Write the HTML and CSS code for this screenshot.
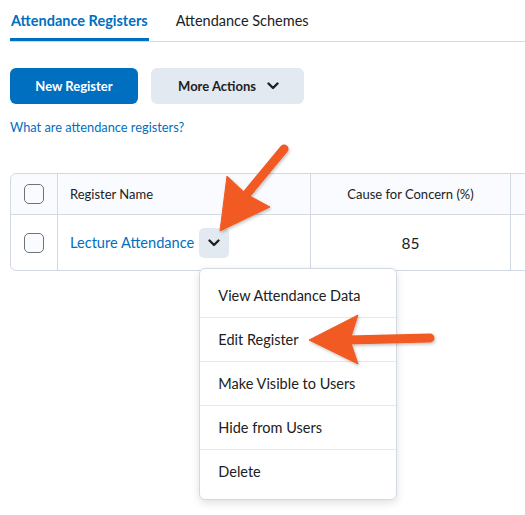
FILE: index.html
```html
<!DOCTYPE html>
<html lang="en">
<head>
<meta charset="utf-8">
<title>Attendance Registers</title>
<link rel="stylesheet" href="styles.css">
</head>
<body>
<div class="page">
  <nav class="tabs">
    <a class="tab tab-active">Attendance Registers</a>
    <a class="tab">Attendance Schemes</a>
  </nav>

  <div class="actions">
    <button class="btn btn-primary">New Register</button>
    <button class="btn btn-secondary">More Actions
      <svg class="chev" width="12" height="8" viewBox="0 0 12 8"><path d="M1.5 1.5 L6 6 L10.5 1.5" fill="none" stroke="#202122" stroke-width="2.4" stroke-linecap="round" stroke-linejoin="round"/></svg>
    </button>
  </div>

  <a class="help-link">What are attendance registers?</a>

  <div class="table-wrap">
    <table class="grid">
      <thead>
        <tr>
          <th class="c-check"><span class="checkbox"></span></th>
          <th class="c-name">Register Name</th>
          <th class="c-cause">Cause for Concern (%)</th>
          <th class="c-more"></th>
        </tr>
      </thead>
      <tbody>
        <tr>
          <td class="c-check"><span class="checkbox"></span></td>
          <td class="c-name">
            <div class="name-cell">
              <a class="reg-link">Lecture Attendance</a>
              <span class="ctx-wrap">
                <button class="ctx-btn">
                  <svg width="12" height="8" viewBox="0 0 12 8"><path d="M1.5 1.5 L6 6 L10.5 1.5" fill="none" stroke="#202122" stroke-width="2.4" stroke-linecap="round" stroke-linejoin="round"/></svg>
                </button>
                <ul class="menu">
                  <li>View Attendance Data</li>
                  <li>Edit Register</li>
                  <li>Make Visible to Users</li>
                  <li>Hide from Users</li>
                  <li>Delete</li>
                </ul>
              </span>
            </div>
          </td>
          <td class="c-cause">85</td>
          <td class="c-more"></td>
        </tr>
      </tbody>
    </table>
  </div>
</div>

<svg class="arrows" width="525" height="515" viewBox="0 0 525 515">
  <defs>
    <filter id="sh" x="-20%" y="-20%" width="140%" height="140%">
      <feDropShadow dx="1" dy="1.5" stdDeviation="1.5" flood-color="#000" flood-opacity="0.25"/>
    </filter>
  </defs>
  <g fill="#f15a24" stroke="#f15a24" filter="url(#sh)">
    <line x1="284" y1="149" x2="246" y2="195" stroke-width="9" stroke-linecap="round"/>
    <polygon points="220,231 227,176 246,194 270,207" stroke-width="1" stroke-linejoin="round"/>
    <line x1="348" y1="340" x2="430" y2="338" stroke-width="9" stroke-linecap="round"/>
    <polygon points="309,340 358,315 350,340 358,364" stroke-width="1" stroke-linejoin="round"/>
  </g>
</svg>
</body>
</html>
```

FILE: styles.css
```css
* { box-sizing: border-box; }
html, body { margin: 0; padding: 0; overflow: hidden; background: #fff; }
body {
  font-family: Lato, "Open Sans", "Liberation Sans", sans-serif;
  color: #202122;
  width: 525px;
  height: 515px;
  position: relative;
}
.page { padding: 0 0 0 10px; }

.tabs {
  display: flex;
  gap: 26px;
  border-bottom: 1px solid #d3d9e3;
  margin-right: -10px;
  height: 42px;
}
.tab {
  display: block;
  font-size: 14.5px;
  font-weight: 400;
  line-height: 18px;
  padding: 12px 1px 8px;
  color: #202122;
  border-bottom: 3px solid transparent;
  height: 41px;
}
.tab-active { color: #006fbf; border-bottom-color: #006fbf; font-weight: 700; }

.actions {
  display: flex;
  gap: 13px;
  margin-top: 26px;
}
.btn {
  font-family: inherit;
  font-size: 13px;
  font-weight: 700;
  height: 36px;
  border: none;
  border-radius: 6px;
  display: flex;
  align-items: center;
  justify-content: center;
  padding: 0;
}
.btn-primary { background: #006fbf; color: #fff; width: 128px; }
.btn-secondary { background: #e3e9f1; color: #202122; width: 153px; gap: 11px; padding-left: 2px; }
.chev { display: block; }

.help-link {
  display: block;
  margin-top: 15px;
  font-size: 12.8px;
  line-height: 16px;
  color: #006fbf;
}

.table-wrap { margin-top: 38px; }
.grid {
  border-collapse: separate;
  border-spacing: 0;
  width: 620px;
  table-layout: fixed;
  border: 1px solid #d3d9e3;
  border-radius: 6px;
}
.grid th, .grid td {
  padding: 0;
  border-right: 1px solid #d3d9e3;
  vertical-align: middle;
}
.grid th { background: #f9fbff; height: 41px; font-size: 13px; font-weight: 400; color: #202122; border-bottom: 1px solid #d3d9e3; padding-bottom: 1px; }
.grid td { height: 55px; background: #fff; }
.grid th:first-child { border-top-left-radius: 6px; }
.grid tr:last-child td:first-child { border-bottom-left-radius: 6px; }
.grid .c-more { border-right: none; }
.c-check { width: 47px; text-align: center; }
.c-name { width: 253px; text-align: left; }
.grid th.c-name { padding-left: 12px; }
.grid td.c-name { padding-left: 12px; }
.c-cause { width: 200px; text-align: center; }
.grid td.c-cause { font-size: 15.5px; }

.checkbox {
  display: block;
  width: 20px;
  height: 20px;
  margin: 0 auto 0 13px;
  border: 1.5px solid #6e7376;
  border-radius: 5px;
  background: #f9fbff;
}

.name-cell { display: flex; align-items: center; gap: 5px; }
.reg-link { color: #006fbf; font-size: 14.6px; }
.ctx-wrap { position: relative; display: block; }
.ctx-btn {
  width: 30px;
  height: 30px;
  border: none;
  border-radius: 5px;
  background: #e3e9f1;
  display: flex;
  align-items: center;
  justify-content: center;
  padding: 0;
  margin-top: 0;
}

.menu {
  position: absolute;
  left: 0;
  top: 40px;
  width: 198px;
  margin: 0;
  padding: 5px 0;
  list-style: none;
  background: #fff;
  border: 1px solid #d3d9e3;
  border-radius: 6px;
  box-shadow: 0 3px 8px rgba(0,0,0,0.12);
  z-index: 5;
}
.menu li {
  height: 44px;
  display: flex;
  align-items: center;
  padding-left: 18px;
  font-size: 14.5px;
  color: #202122;
  border-bottom: 1px solid #e3e9f1;
}
.menu li:last-child { border-bottom: none; }

.arrows { position: absolute; left: 0; top: 0; z-index: 10; pointer-events: none; }
```
